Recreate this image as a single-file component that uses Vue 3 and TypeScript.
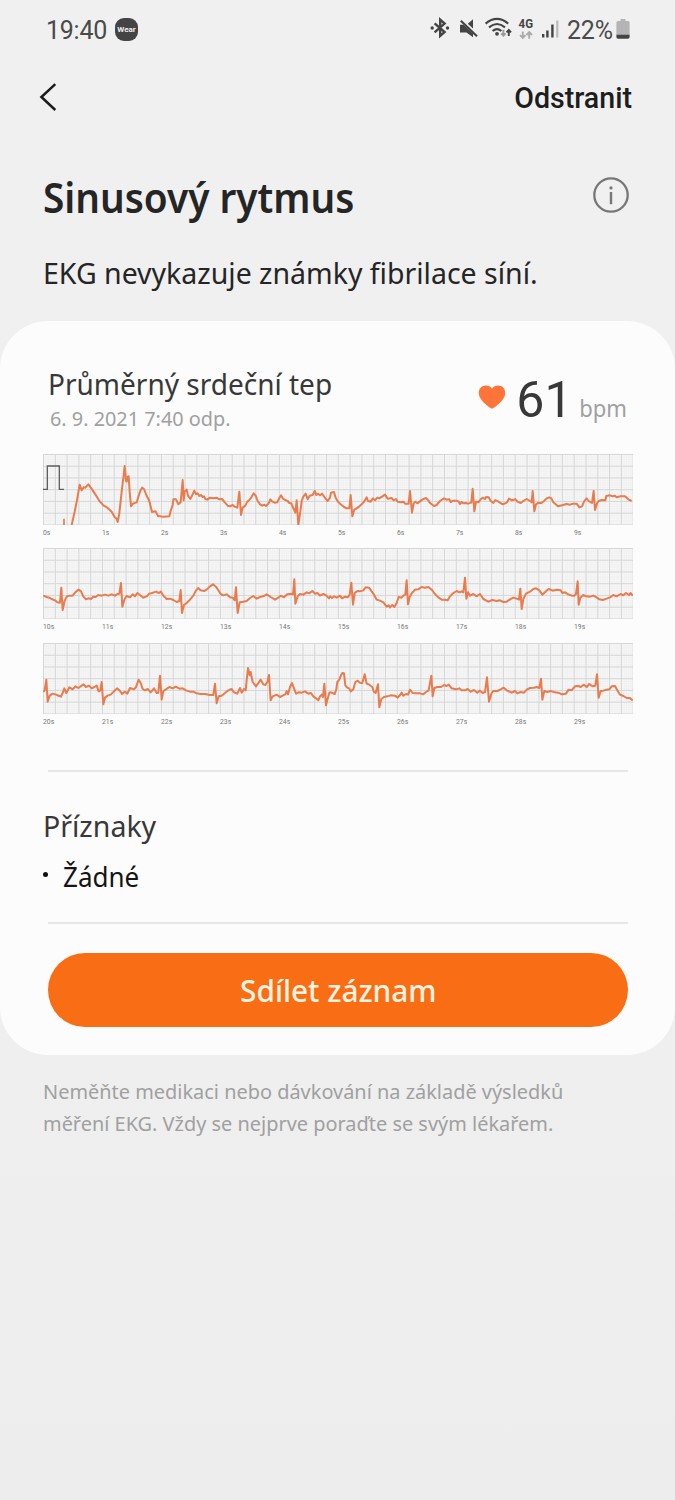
<script setup lang="ts">
interface Segment {
  dx: number
  points: string
}
interface Strip {
  start: number
  top: number
  segments: Segment[]
}

const WIDTH = 1770
const HEIGHT = 213

const strips: Strip[] = [
  {
    start: 0,
    top: 27,
    segments: [
      {
        dx: -39,
        points:
          '125,240 134,200 142,160 149,119 155,136 161,127 166,128 175,118 184,130 196,148 210,170 220,181 232,188 245,200 254,216 260,221 263,231 268,205 275,140 281,90 284,63 288,108 290,110 293,95 296,94 299,140 303,184 309,176 320,172 330,140 336,128 342,132 349,150 358,168 366,201 377,199 384,213 400,215 418,214 422,198 428,180 430,163 438,163 445,178 452,172 458,105 461,166 464,140 470,134 474,152 481,162 487,150 493,137 498,147 503,145 508,153 513,150 518,156 522,154 526,162 532,164 540,158 550,160 560,158 568,163 576,162 585,173 593,182',
      },
      {
        dx: 561,
        points:
          '0,184 8,180 14,185 22,188 28,140 33,210 38,188 46,182 52,170 58,165 64,157 71,145 77,152 83,168 90,178 97,182 103,179 108,183 116,175 121,163 126,169 134,173 142,172 146,163 153,151 158,160 165,165 173,168 178,174 184,175 187,183 196,203 200,166 205,240 211,200 215,168 220,155 227,146 233,163 239,152 248,150 254,138 259,150 264,146 270,151 276,146 281,153 286,160 293,168 300,158 303,143 312,141 317,158 324,170 332,178 342,186 350,190 358,190 362,150 367,214 373,194 380,190 388,184 395,178 402,170 410,157 414,168 422,170 429,160 435,166 442,158 448,160 456,155 465,149 473,161 485,159 491,166 498,162 503,170 512,172 520,170 525,176 536,176 540,138 546,203 551,175 556,170 562,175 570,169 578,163 588,159 595,166',
      },
      {
        dx: 1161,
        points:
          '0,174 12,183 20,180 30,168 42,160 50,164 58,163 62,171 70,167 80,167 86,170 90,177 95,171 100,175 108,174 114,176 124,173 128,131 133,199 138,170 145,172 152,163 158,158 165,162 168,156 176,157 182,168 190,174 196,165 205,170 218,178 230,173 237,161 246,166 257,163 262,170 272,174 280,168 290,162 300,168 305,172 308,138 313,199 318,178 326,173 334,174 342,168 350,160 358,157 364,160 370,172 384,184 396,181 410,177 420,179 430,176 440,176 448,187 456,184 462,170 470,160 476,168 486,174 491,138 495,195 501,175 506,168 515,165 526,166 529,153 540,151 548,154 555,152 560,157 572,154 585,154 595,163 605,168',
      },
    ],
  },
  {
    start: 10,
    top: 25,
    segments: [
      {
        dx: -39,
        points:
          '40,168 50,172 58,174 65,178 75,182 82,188 90,189 94,144 98,211 104,183 110,171 118,168 128,168 138,156 146,150 153,155 160,170 168,179 175,176 183,178 190,171 197,172 205,166 215,168 225,165 235,168 245,164 255,168 262,163 268,162 273,130 277,201 283,180 290,169 300,173 308,164 315,170 322,160 330,166 340,174 350,170 358,162 366,160 378,156 387,160 393,156 400,168 410,178 420,177 430,181 440,187 448,184 452,151 456,220 462,196 470,190 480,180 490,168 498,152 505,145 512,152 522,154 530,150 540,140 549,134 558,141 565,152 572,163 580,167 590,164 600,173 608,174 614,182 618,143 623,220 629,188 640,186 650,184 660,175 670,169 680,177 690,172 700,170 710,164 722,172 735,180 745,174 752,168 762,173 772,164 785,162 789,164 793,119 796,192 803,170 810,163 820,165 830,158 838,161 847,154 855,162 862,160 870,168 880,163 888,167 897,176',
      },
      {
        dx: 861,
        points:
          '0,170 6,175 12,170 20,174 30,168 36,176 45,171 53,173 59,165 64,129 69,195 74,160 82,154 90,155 100,152 107,143 117,144 125,155 132,165 140,180 150,183 160,188 170,201 176,197 180,203 187,196 193,202 200,190 206,172 215,174 220,168 226,165 230,122 234,194 239,172 246,160 255,150 265,149 275,142 285,144 295,142 305,150 315,163 325,173 335,180 345,180 353,182 360,170 370,160 380,154 388,158 395,155 400,158 405,114 409,177 414,158 420,168 430,163 440,170 450,163 460,178 475,186 487,181 500,184 510,182 520,187 530,186 540,179 550,174 560,177 567,180 571,147 575,208 580,178 588,162 600,156 610,148 618,146 628,152 637,165 648,155 656,148 668,153 680,150 692,152 697,160 705,158 715,164 725,168 733,168 738,163 743,125 746,195 751,174 760,166 768,170 780,171 790,168 800,173 808,179 818,181 830,177 840,173 850,166 860,170 872,163 880,167 888,160 897,166 902,160 908,168',
      },
    ],
  },
  {
    start: 20,
    top: 308,
    segments: [
      {
        dx: -39,
        points:
          '40,455 44,450 49,418 53,484 59,466 68,460 78,463 88,467 93,469 99,455 103,444 109,458 118,441 128,447 136,438 145,443 155,436 161,432 168,440 177,436 185,444 193,440 200,436 206,453 211,450 215,425 220,492 225,472 233,466 242,463 252,453 262,444 270,452 276,461 284,454 292,460 300,443 312,447 318,440 326,418 332,428 338,446 345,450 353,446 362,456 372,444 380,458 385,457 390,406 395,478 400,452 408,447 418,440 428,444 437,439 448,445 458,444 468,450 480,454 490,454 500,459 512,461 525,461 540,464 550,464 555,430 560,489 566,468 575,466 585,458 595,450 605,446 612,456 622,460 630,443 635,457 642,446 647,450 650,420 654,383 659,405 662,395 668,425 678,438 686,427 692,418 700,432 706,434 712,425 717,404 722,480 728,468 740,463 750,470 758,466 766,462 770,452 774,462 780,440 786,428 792,444 798,460 806,456 815,457 825,453 835,460 843,458 850,468 858,474 865,480 870,468 875,463 879,470 883,430 888,495 893,475 898,457',
      },
      {
        dx: 861,
        points:
          '3,456 14,461 19,447 22,425 28,418 33,405 37,398 42,399 46,435 51,441 57,444 62,453 70,447 76,425 83,421 90,427 97,428 104,402 110,430 118,433 127,440 132,455 137,458 144,432 148,501 154,476 162,470 172,468 182,465 195,466 203,472 210,464 215,457 220,466 228,461 234,463 240,448 248,458 258,459 270,459 280,462 288,455 296,450 304,406 308,468 313,443 322,440 333,440 342,434 350,437 356,433 365,444 378,447 388,444 395,450 405,450 413,446 422,454 432,449 442,457 450,451 458,458 465,455 471,411 477,484 484,460 490,452 502,452 512,447 521,442 530,450 545,457 555,452 562,459 572,455 582,457 590,448 600,443 612,442 620,440 628,443 633,415 637,478 643,452 652,455 662,452 675,456 688,458 695,462 708,460 716,448 725,450 735,438 745,437 752,440 762,433 770,440 778,431 787,438 796,436 801,402 806,472 812,452 820,451 830,448 838,447 845,438 855,437 862,450 870,463 880,467 890,473 900,473 908,481',
      },
    ],
  },
]

// Joins the recorded segments of a strip into one polyline in chart units.
function trace(strip: Strip): string {
  return strip.segments
    .flatMap((s) =>
      s.points.split(' ').map((p) => {
        const [x, y] = p.split(',').map(Number)
        return `${x + s.dx},${y - strip.top}`
      }),
    )
    .join(' ')
}

function gridPath(stepX: number, stepY: number): string {
  let d = ''
  for (let x = 1.5; x <= WIDTH + 1; x += stepX) d += `M${x.toFixed(1)} 0V${HEIGHT}`
  for (let y = 1.5; y <= HEIGHT; y += stepY) d += `M0 ${y.toFixed(1)}H${WIDTH}`
  return d
}

const minorGrid = gridPath(7.08, 7.08)
const majorGrid = gridPath(35.38, 35.2)
</script>

<template>
  <main class="screen">
    <header class="status">
      <span class="clock">19:40</span>
      <span class="wear">Wear</span>
      <svg class="status-icons" viewBox="0 0 132 26" width="132" height="26">
        <path d="M4.6 8.300 14.600 17 10.200 20.900V4.700L14.600 8.600 4.600 17.300" fill="none" stroke="#444" stroke-width="2.4" />
        <circle cx="2.2" cy="13" r="1.700" fill="#444" />
        <circle cx="17.500" cy="13" r="1.700" fill="#444" />
        <path d="M30 9.800h3.500L43 18.500V22.300L36.500 17.500H30zM37.800 8.800 43 4.300v9.200z" fill="#444" />
        <path d="M30.800 5.800 47 21.300" stroke="#444" stroke-width="2.200" />
        <g fill="none" stroke="#444" stroke-width="2.100">
          <path d="M55.600 8.600Q67 -.8 78.200 8.600" />
          <path d="M59 12.400Q67 5.600 75 12.400" />
          <path d="M62.600 16Q67 12.200 71.400 16" />
        </g>
        <circle cx="67" cy="18.800" r="1.900" fill="#444" />
        <g fill="none" stroke-width="1.900">
          <path d="M73.400 14.800v6M71.200 18.400l2.200 2.300 2.200-2.300" stroke="#999" />
          <path d="M78.800 21v-6M76.500 17.300l2.300-2.400 2.300 2.400" stroke="#444" />
          <path d="M92.800 16.500v6.500M90 20.200l2.800 2.800 2.800-2.800M99.200 23.700v-6.500M96.400 20l2.800-2.800L102 20" stroke="#aaa" />
        </g>
        <text x="88.600" y="13" class="net" textLength="14.500" lengthAdjust="spacingAndGlyphs">4G</text>
        <path d="M112 19h2.400v3.500H112zM116.200 15.500h2.400v7h-2.400zM121.200 9.500h2.400v13h-2.400z" fill="#444" />
        <path d="M126.200 5.500h2.200v17h-2.200z" fill="#bbb" />
      </svg>
      <span class="percent">22%</span>
      <svg class="battery" viewBox="0 0 14 21" width="14" height="21">
        <path d="M4.500 0h5v2H12q1.600 0 1.600 1.600V16H.4V3.600Q.4 2 2 2h2.500z" fill="#b4b4b4" />
        <path d="M.4 15.800h13.200V18q0 1.800-1.800 1.800H2.200Q.4 19.800 .4 18z" fill="#444" />
      </svg>
    </header>

    <nav class="bar">
      <svg class="back" viewBox="0 0 18 30" width="18" height="30">
        <path d="M16.300 2.200 2.400 15 16.300 28" fill="none" stroke="#1c1c1c" stroke-width="2.500" />
      </svg>
      <button class="remove">Odstranit</button>
    </nav>

    <section class="intro">
      <div class="heading">
        <h1><span class="fit">Sinusový rytmus</span></h1>
        <svg viewBox="0 0 38 38" width="38" height="38">
          <circle cx="19" cy="19" r="16.700" fill="none" stroke="#777" stroke-width="2.300" />
          <circle cx="19" cy="11.900" r="1.600" fill="#777" />
          <path d="M19 16v12.200" stroke="#777" stroke-width="2.400" />
        </svg>
      </div>
      <p><span class="fit">EKG nevykazuje známky fibrilace síní.</span></p>
    </section>

    <section class="card">
      <div class="summary">
        <div class="caption">
          <h2><span class="fit">Průměrný srdeční tep</span></h2>
          <time><span class="fit">6. 9. 2021 7:40 odp.</span></time>
        </div>
        <div class="rate">
          <svg viewBox="0 0 28 24" width="28" height="24">
            <path d="M14 23.700C12.500 23.300.8 15.400.8 8.200.8 3.300 4.200.6 7.700.6c2.700 0 4.900 1.100 6.300 2.900C15.400 1.700 17.600.6 20.300.6c3.500 0 6.900 2.700 6.900 7.600C27.200 15.400 15.500 23.300 14 23.700z" fill="#ff7439" />
          </svg>
          <strong>61</strong>
          <span class="unit"><span class="fit">bpm</span></span>
        </div>
      </div>

      <figure v-for="strip in strips" :key="strip.start" class="strip">
        <svg :viewBox="`0 0 ${WIDTH} ${HEIGHT}`" width="590" height="71">
          <rect :width="WIDTH" :height="HEIGHT" fill="#f8f8f8" />
          <path :d="minorGrid" stroke="#efefef" stroke-width="2" />
          <path :d="majorGrid" stroke="#d3d7d6" stroke-width="3" />
          <g v-if="strip.start === 0" fill="none">
            <path d="M0 106H13V36H49V106H63" stroke="#606060" stroke-width="4" />
            <path d="M63 194V213" stroke="#e87a4d" stroke-width="5" />
          </g>
          <polyline :points="trace(strip)" fill="none" stroke="#e97b4e" stroke-width="6" stroke-linejoin="round" />
        </svg>
        <figcaption>
          <span v-for="n in 10" :key="n">{{ strip.start + n - 1 }}s</span>
        </figcaption>
      </figure>

      <hr />
      <div class="symptoms">
        <h2><span class="fit">Příznaky</span></h2>
        <ul>
          <li><span class="fit">Žádné</span></li>
        </ul>
      </div>
      <hr />
      <button class="share"><span class="fit">Sdílet záznam</span></button>
    </section>

    <footer class="note">
      <p><span class="fit">Neměňte medikaci nebo dávkování na základě výsledků</span></p>
      <p><span class="fit">měření EKG. Vždy se nejprve poraďte se svým lékařem.</span></p>
    </footer>
  </main>
</template>

<style>
body {
  background: #efefef;
}
</style>

<style scoped>
* {
  box-sizing: border-box;
}
.screen {
  width: 675px;
  height: 1500px;
  overflow: hidden;
  background: linear-gradient(#f0f0f0 0, #efefef 1050px, #ededee 1500px);
  font-family: 'Noto Sans', 'Open Sans', sans-serif;
  color: #252525;
  white-space: nowrap;
}
h1,
h2,
p,
ul,
figure {
  margin: 0;
  padding: 0;
  font-weight: 400;
}
button {
  border: 0;
  background: none;
  padding: 0;
}
.fit {
  display: inline-block;
  transform-origin: 0 50%;
}
.status {
  display: flex;
  align-items: center;
  height: 60px;
  padding: 0 45px 0 46px;
  font-family: Roboto, sans-serif;
  color: #4a4a4a;
}
.clock {
  width: 69px;
  font-size: 25px;
  letter-spacing: -0.25px;
}
.wear {
  width: 23px;
  height: 23px;
  margin-top: -1px;
  border-radius: 9px;
  background: #444;
  color: #eee;
  font: 700 8px/23px Roboto, sans-serif;
  text-align: center;
}
.status-icons {
  margin: -5px 0 0 auto;
}
.net {
  font: 700 12px Roboto, sans-serif;
  fill: #444;
}
.percent {
  margin-left: 5px;
  width: 49px;
  font-size: 25px;
  letter-spacing: -0.2px;
}
.battery {
  margin-top: -2px;
}
.bar {
  display: flex;
  align-items: center;
  justify-content: space-between;
  height: 74px;
  padding: 0 43px 0 38.5px;
}
.back {
  margin-top: -1px;
}
.remove {
  margin-top: 2px;
  font: 500 28.6px Roboto, sans-serif;
  color: #1d1d1d;
}
.intro {
  height: 187px;
  padding: 36px 45px 0 43px;
}
.heading {
  display: flex;
  justify-content: space-between;
  height: 54px;
}
.heading svg {
  margin: 6px 0 0;
}
h1 {
  font-size: 41px;
  line-height: 54px;
  font-weight: 600;
}
h1 .fit {
  transform: scaleX(0.945);
}
.intro p {
  margin-top: 29px;
  font-size: 29px;
  line-height: 40px;
}
.intro p .fit {
  transform: scaleX(0.982);
}
.card {
  height: 734px;
  border-radius: 48px;
  background: #fcfcfc;
  padding: 43px 42px 0 43px;
}
.summary {
  display: flex;
  justify-content: space-between;
  height: 90px;
  padding: 0 6px 0 5px;
}
h2 {
  font-size: 29px;
  line-height: 40px;
  color: #383838;
}
.summary h2 {
  height: 40px;
}
.summary h2 .fit {
  transform: scaleX(0.966);
}
time {
  display: block;
  padding-left: 1.5px;
  font-size: 20.5px;
  line-height: 28px;
  color: #a0a0a0;
}
time .fit {
  transform: scaleX(0.968);
}
.rate {
  display: flex;
  height: 72px;
}
.rate svg {
  margin: 21px 10px 0 0;
}
.rate strong {
  font: 400 50px/72px Roboto, sans-serif;
  color: #383838;
}
.unit {
  margin: 27px 0 0 2.5px;
  font-size: 24px;
  line-height: 34px;
  color: #a0a0a0;
}
.unit .fit {
  transform: scaleX(0.92);
  transform-origin: 100% 50%;
}
.strip {
  height: 94.3px;
}
.strip svg {
  display: block;
}
figcaption {
  display: grid;
  grid-template-columns: repeat(10, 59px);
  font: 6.8px/8px Roboto, sans-serif;
  color: #777;
  padding-top: 4px;
}
hr {
  width: 580px;
  height: 2px;
  margin: 0 0 0 5px;
  border: 0;
  background: #e6e6e7;
}
.strip + hr {
  margin-top: 33px;
}
.symptoms {
  height: 150px;
  padding-top: 34px;
}
.symptoms h2 .fit {
  transform: scaleX(0.983);
}
li {
  display: flex;
  align-items: center;
  margin-top: 10px;
  font-size: 28px;
  line-height: 40px;
  color: #151515;
}
li .fit {
  transform: scaleX(0.93);
}
li::before {
  content: '';
  width: 5px;
  height: 5px;
  margin: -2px 15px 0 0;
  border-radius: 50%;
  background: #111;
}
.share {
  display: block;
  width: 580px;
  height: 74px;
  margin: 29px 0 0 5px;
  border-radius: 37px;
  background: #f96d15;
  color: #fff4e0;
  font: 500 31px/74px 'Noto Sans', sans-serif;
  text-align: center;
}
.share .fit {
  transform: scaleX(0.96);
  transform-origin: 50% 50%;
}
.note {
  padding: 20px 43px 0;
  font-size: 20.5px;
  line-height: 32px;
  color: #a0a0a0;
}
.note .fit {
  transform: scaleX(0.972);
}
</style>
